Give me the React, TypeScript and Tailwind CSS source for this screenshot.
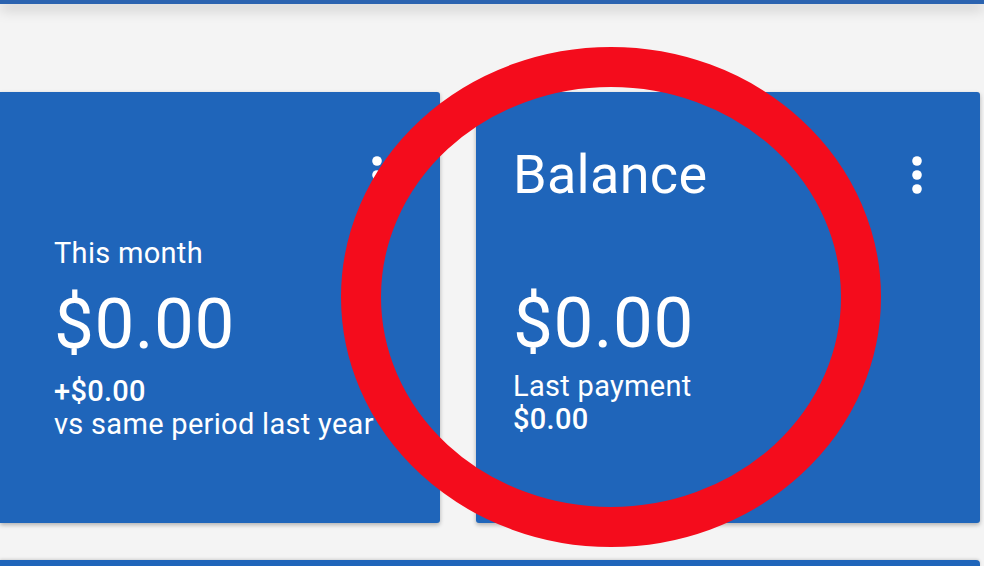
import * as React from "react"

const font = { fontFamily: "Roboto, 'Noto Sans', sans-serif" }

function Kebab() {
    return (
        <svg width="10" height="38" viewBox="0 0 10 38" className="shrink-0">
            <circle cx="5" cy="5" r="4.8" fill="#ffffff" />
            <circle cx="5" cy="19" r="4.8" fill="#ffffff" />
            <circle cx="5" cy="33" r="4.8" fill="#ffffff" />
        </svg>
    )
}

function Card({
    title,
    className,
    children,
}: {
    title?: string
    className?: string
    children: React.ReactNode
}) {
    return (
        <div
            className={
                "flex flex-col h-[431px] bg-[#1f65ba] text-white rounded-[3px] shadow-[0_2px_4px_rgba(0,0,0,0.28)] pt-[56px] pr-[58px] " +
                (className ?? "")
            }
        >
            <div className="flex items-center justify-between h-[54px]">
                <span className="text-[54px] leading-none tracking-[0.3px]">{title}</span>
                <Kebab />
            </div>
            {children}
        </div>
    )
}

export default function App() {
    return (
        <div className="relative h-[566px] w-[984px] overflow-hidden bg-[#f4f4f4]" style={font}>
            <div className="h-[4px] bg-[#2b63b0] shadow-[0_4px_14px_rgba(0,0,0,0.35)]" />

            <div className="mt-[88px] flex gap-[36px] pr-[4px]">
                <Card className="w-[440px] rounded-l-none pl-[54px]">
                    <div className="mt-[37px] text-[29px] leading-none tracking-[0.3px]">This month</div>
                    <div className="mt-[20px] text-[71px] leading-none tracking-[0.5px]">$0.00</div>
                    <div className="mt-[18px] text-[29px] leading-none tracking-[0.3px] font-medium">+$0.00</div>
                    <div className="mt-[4px] text-[29px] leading-none tracking-[0.3px]">vs same period last year</div>
                </Card>

                <Card title="Balance" className="w-[504px] pl-[37px]">
                    <div className="mt-[85px] text-[71px] leading-none tracking-[0.5px]">$0.00</div>
                    <div className="mt-[14px] text-[29px] leading-none tracking-[0.3px]">Last payment</div>
                    <div className="mt-[4px] text-[29px] leading-none tracking-[0.3px] font-medium">$0.00</div>
                </Card>
            </div>

            <div className="mt-[37px] mr-[4px] h-[40px] bg-[#1f65ba] rounded-tr-[4px] shadow-[0_-1px_3px_rgba(0,0,0,0.15)]" />

            <svg
                className="pointer-events-none absolute inset-0"
                width="984"
                height="566"
                viewBox="0 0 984 566"
            >
                <ellipse cx="611" cy="297" rx="250" ry="230" fill="none" stroke="#f40c1c" strokeWidth="40" />
            </svg>
        </div>
    )
}
